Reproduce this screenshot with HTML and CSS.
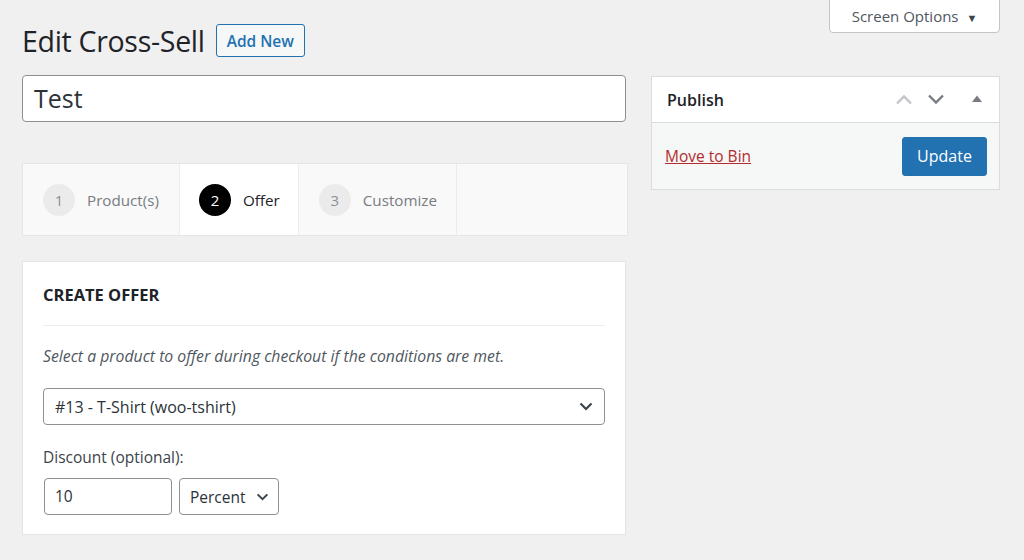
FILE: index.html
```html
<!DOCTYPE html>
<html>
<head>
<meta charset="utf-8">
<link rel="stylesheet" href="styles.css">
</head>
<body>
<div class="page">
  <div class="head">
    <h1 class="title">Edit Cross-Sell</h1>
    <a class="add-new">Add New</a>
  </div>
  <div class="opts">
    <button class="screen-opts">Screen Options <span class="caret">&#9660;</span></button>
  </div>
  <div class="main">
    <div class="title-input">Test</div>
    <div class="tabs">
      <div class="tab first"><span class="num">1</span><span class="tab-label">Product(s)</span></div>
      <div class="tab active"><span class="num">2</span><span class="tab-label">Offer</span></div>
      <div class="tab"><span class="num">3</span><span class="tab-label">Customize</span></div>
    </div>
    <div class="card">
      <h2 class="card-title">CREATE OFFER</h2>
      <hr class="rule">
      <p class="hint">Select a product to offer during checkout if the conditions are met.</p>
      <div class="select wide">
        <span>#13 - T-Shirt (woo-tshirt)</span>
        <svg class="chev" width="14" height="9" viewBox="0 0 14 9"><path d="M1.5 1.5 L7 7 L12.5 1.5" fill="none" stroke="#3c434a" stroke-width="2.2"/></svg>
      </div>
      <label class="label">Discount (optional):</label>
      <div class="discount">
        <div class="num-input">10</div>
        <div class="select small">
          <span>Percent</span>
          <svg class="chev" width="13" height="8" viewBox="0 0 14 9"><path d="M1.5 1.5 L7 7 L12.5 1.5" fill="none" stroke="#3c434a" stroke-width="2.2"/></svg>
        </div>
      </div>
    </div>
  </div>
  <div class="side">
    <div class="box">
      <div class="box-head">
        <span class="box-title">Publish</span>
        <div class="box-icons">
          <svg width="18" height="11" viewBox="0 0 18 11"><path d="M2 9.5 L9 2.5 L16 9.5" fill="none" stroke="#c3c4c7" stroke-width="2.4"/></svg>
          <svg width="18" height="11" viewBox="0 0 18 11"><path d="M2 1.5 L9 8.5 L16 1.5" fill="none" stroke="#787c82" stroke-width="2.4"/></svg>
          <svg class="tri" width="12" height="9" viewBox="0 0 12 9"><path d="M1 8 L6 1.5 L11 8 Z" fill="#787c82"/></svg>
        </div>
      </div>
      <div class="box-body">
        <a class="trash">Move to Bin</a>
        <button class="update">Update</button>
      </div>
    </div>
  </div>
</div>
</body>
</html>
```

FILE: styles.css
```css
* { box-sizing: border-box; }
html, body { margin: 0; padding: 0; }
body {
  background: #f0f0f1;
  font-family: "Open Sans", "Noto Sans", sans-serif;
  color: #1d2327;
  width: 1024px;
  height: 560px;
  overflow: hidden;
}
.page {
  display: grid;
  grid-template-columns: 604px 349px;
  column-gap: 25px;
  padding: 0 24px 0 22px;
}
.head {
  display: flex;
  align-items: center;
  gap: 11px;
  padding-top: 24px;
  height: 57px;
}
.title {
  margin: 0;
  font-size: 28.5px;
  font-weight: 400;
  color: #1d2327;
  letter-spacing: -0.3px;
}
.add-new {
  display: inline-flex;
  align-items: center;
  height: 33px;
  padding: 0 10px;
  border: 1px solid #2271b1;
  border-radius: 3px;
  background: #f6f7f7;
  color: #2271b1;
  font-size: 15.5px;
  font-weight: 600;
}
.opts {
  display: flex;
  justify-content: flex-end;
  align-items: flex-start;
}
.screen-opts {
  width: 171px;
  height: 34px;
  margin-top: -1px;
  background: #fff;
  border: 1px solid #c3c4c7;
  border-radius: 0 0 4px 4px;
  color: #50575e;
  font-family: inherit;
  font-size: 15px;
  padding: 0;
}
.caret { font-size: 11px; margin-left: 4px; color: #3c434a; }
.main { padding-top: 18px; }
.title-input {
  height: 47px;
  background: #fff;
  border: 1px solid #8c8f94;
  border-radius: 4px;
  padding: 0 11px;
  font-size: 25px;
  line-height: 45px;
  color: #2c3338;
}
.tabs {
  display: flex;
  margin-top: 41px;
  width: 606px;
  height: 73px;
  background: #f9f9f9;
  border: 1px solid #e6e6e6;
}
.tab {
  display: flex;
  align-items: center;
  gap: 12px;
  padding: 0 19px 0 20px;
  border-right: 1px solid #ececec;
  color: #787c82;
  font-size: 15.2px;
}
.tab.first { padding-right: 20px; }
.tab.active { background: #fff; color: #1d2327; padding: 0 18px 0 19px; }
.num {
  width: 32px;
  height: 32px;
  border-radius: 50%;
  background: #ebebeb;
  display: flex;
  align-items: center;
  justify-content: center;
  font-size: 15px;
  color: #8c8f94;
}
.tab.active .num { background: #000; color: #fff; }
.card {
  margin-top: 25px;
  height: 274px;
  background: #fff;
  border: 1px solid #e2e4e7;
  padding: 21px 20px 20px;
}
.card-title {
  margin: 0;
  font-size: 16.5px;
  font-weight: 700;
  line-height: 24px;
  color: #1d2327;
}
.rule {
  margin: 18px 0 0;
  border: 0;
  border-top: 1px solid #ececec;
}
.hint {
  margin: 20px 0 0;
  font-style: italic;
  font-size: 15.8px;
  line-height: 20px;
  color: #50575e;
}
.select {
  display: flex;
  align-items: center;
  justify-content: space-between;
  border: 1px solid #8c8f94;
  border-radius: 4px;
  background: #fff;
  color: #2c3338;
  font-size: 15.5px;
}
.select.wide {
  margin-top: 22px;
  height: 37px;
  padding: 0 11px 0 11px;
  font-size: 16px;
}
.label {
  display: block;
  margin-top: 22px;
  font-size: 15.5px;
  line-height: 20px;
  color: #3c434a;
}
.discount {
  display: flex;
  gap: 7px;
  margin-top: 11px;
}
.num-input {
  width: 128px;
  height: 37px;
  margin-left: 1px;
  border: 1px solid #8c8f94;
  border-radius: 4px;
  padding: 0 10px;
  line-height: 35px;
  font-size: 15.5px;
  color: #2c3338;
}
.select.small {
  width: 100px;
  height: 37px;
  padding: 0 9px 0 10px;
}
.side { padding-top: 19px; }
.box {
  background: #fff;
  border: 1px solid #dcdcde;
}
.box-head {
  height: 46px;
  display: flex;
  align-items: center;
  justify-content: space-between;
  padding: 0 16px 0 15px;
  border-bottom: 1px solid #dcdcde;
}
.box-title { font-size: 16px; font-weight: 600; color: #1d2327; }
.box-icons { display: flex; align-items: center; gap: 14px; }
.box-icons .tri { margin-left: 12px; margin-top: -2px; }
.box-body {
  height: 66px;
  background: #f6f7f7;
  display: flex;
  align-items: center;
  justify-content: space-between;
  padding: 0 12px 0 13px;
}
.trash {
  color: #b32d2e;
  text-decoration: underline;
  font-size: 15.5px;
}
.update {
  width: 85px;
  height: 39px;
  background: #2271b1;
  border: 1px solid #2271b1;
  border-radius: 3px;
  color: #fff;
  font-family: inherit;
  font-size: 16px;
}
```
